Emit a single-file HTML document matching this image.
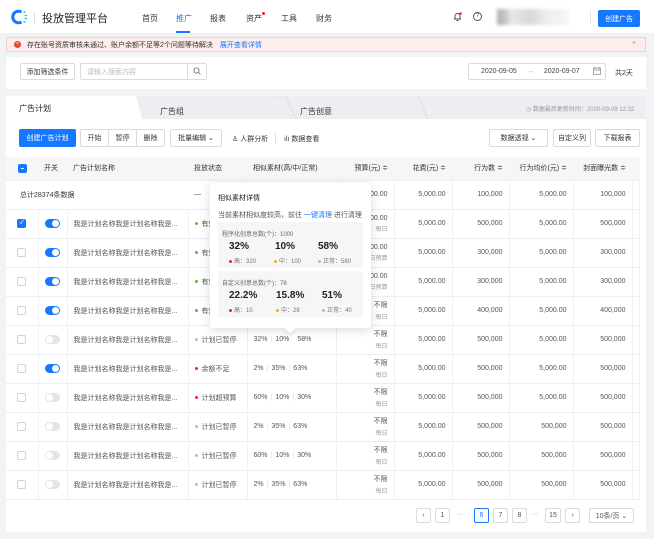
<!DOCTYPE html>
<html><head><meta charset="utf-8"><style>
*{box-sizing:border-box;margin:0;padding:0}
body{width:654px;height:539px;background:#f2f3f5;font-family:"Liberation Sans","Noto Sans CJK SC",sans-serif;color:#333;font-size:7px;position:relative;overflow:hidden}
.a{position:absolute}
.hdr{left:0;top:0;width:654px;height:33px;background:#fff}
.nav{top:13px;font-size:8px;color:#333}
.btn{position:absolute;border:1px solid #d9dbe0;background:#fff;border-radius:2px;font-size:7px;color:#333;display:flex;align-items:center;justify-content:center}
.blue{background:#1677ff;color:#fff;border-color:#1677ff}
table{border-collapse:collapse;table-layout:fixed;position:absolute;left:6px;top:157px;width:634px}
td,th{height:29px;border-bottom:1px solid #eceef1;border-right:1px solid #f0f1f3;font-weight:normal;font-size:7px;color:#555;padding:0 6px;white-space:nowrap;overflow:hidden}
th{height:23px;background:#f5f6f8;color:#333;text-align:left;border-right:none}
.r{text-align:right}
.c{text-align:center;padding:0}
.cb{display:inline-block;width:9px;height:9px;border:1px solid #d0d3d8;border-radius:2px;background:#fff;vertical-align:middle}
.cbk{background:#1677ff;border-color:#1677ff;position:relative}
.tg{display:inline-block;width:15px;height:9px;border-radius:5px;background:#e3e5e8;position:relative;vertical-align:middle}
.tg:after{content:"";position:absolute;left:1px;top:1px;width:7px;height:7px;border-radius:50%;background:#fff}
.on{background:#1677ff}.on:after{left:7px}
.dot{display:inline-block;width:3px;height:3px;border-radius:50%;margin-right:4px;vertical-align:middle}
.sub{display:block;font-size:6px;color:#999;margin-top:2px}
.sep{color:#ddd;margin:0 3px}
.pg{position:absolute;top:508px;height:15px;border:1px solid #d9dbe0;background:#fff;border-radius:2px;font-size:7px;display:flex;align-items:center;justify-content:center;color:#555}
</style></head><body>
<div class="a hdr"></div>
<svg class="a" style="left:9px;top:8px" width="20" height="18" viewBox="0 0 20 18"><path d="M12.5 4A5.8 5.8 0 1 0 12.5 14" fill="none" stroke="#1677ff" stroke-width="3"/><g stroke="#2bc4f0" stroke-width="1.3"><line x1="14.5" y1="4.5" x2="16.5" y2="3.5"/><line x1="15.5" y1="7.5" x2="18" y2="7.5"/><line x1="15.5" y1="10.5" x2="18" y2="10.5"/><line x1="14.5" y1="13.5" x2="16.5" y2="14.5"/></g></svg>
<div class="a" style="left:34px;top:12px;width:1px;height:11px;background:#ddd"></div>
<div class="a" style="left:42px;top:10px;font-size:11px;color:#222">投放管理平台</div>
<div class="a nav" style="left:142px">首页</div>
<div class="a nav" style="left:176px;color:#1677ff">推广</div>
<div class="a" style="left:176px;top:31px;width:14px;height:2px;background:#1677ff"></div>
<div class="a nav" style="left:210px">报表</div>
<div class="a nav" style="left:246px">资产</div>
<div class="a" style="left:262px;top:12px;width:3px;height:3px;border-radius:50%;background:#f5222d"></div>
<div class="a nav" style="left:281px">工具</div>
<div class="a nav" style="left:316px">财务</div>
<svg class="a" style="left:453px;top:12px" width="9" height="10" viewBox="0 0 9 10"><path d="M2 7V4a2.5 2.5 0 0 1 5 0v3h1H1zM3.5 8.5h2" fill="none" stroke="#444" stroke-width="0.9"/><circle cx="7.5" cy="1.5" r="1.3" fill="#f5222d"/></svg>
<div class="a" style="left:473px;top:12px;width:9px;height:9px;border:1px solid #555;border-radius:50%;font-size:6px;text-align:center;line-height:7px">?</div>
<div class="a" style="left:497px;top:9px;width:72px;height:16px;background:linear-gradient(90deg,#b0aeae 0,#c9c7c7 12%,#e8e8e8 20%,#d8d8d8 45%,#eee 70%,#f6f6f6 100%);filter:blur(1.5px)"></div>
<div class="a" style="left:590px;top:11px;width:1px;height:12px;background:#e5e5e5"></div>
<div class="btn blue" style="left:598px;top:10px;width:42px;height:17px">创建广告</div>

<div class="a" style="left:6px;top:37px;width:640px;height:15px;background:#fdeeec;border:1px solid #f8cdc8"></div>
<div class="a" style="left:14px;top:41px;width:7px;height:7px;border-radius:50%;background:#f04134;color:#fff;font-size:5px;text-align:center;line-height:7px">×</div>
<div class="a" style="left:27px;top:40px;font-size:7px;color:#333">存在账号资质审核未通过、账户余额不足等2个问题等待解决<span style="color:#1677ff;margin-left:7px">展开查看详情</span></div>
<div class="a" style="left:632px;top:40px;font-size:7px;color:#999">×</div>

<div class="a" style="left:6px;top:57px;width:640px;height:32px;background:#fff"></div>
<div class="btn" style="left:20px;top:63px;width:55px;height:17px">添加筛选条件</div>
<div class="btn" style="left:80px;top:63px;width:127px;height:17px;justify-content:flex-start;padding-left:6px;color:#bbb">请输入搜索内容</div>
<div class="a" style="left:187px;top:63px;width:1px;height:17px;background:#d9dbe0"></div>
<svg class="a" style="left:193px;top:67px" width="8" height="8" viewBox="0 0 8 8"><circle cx="3.5" cy="3.5" r="2.6" fill="none" stroke="#666" stroke-width="0.8"/><path d="M5.5 5.5L7.5 7.5" stroke="#666" stroke-width="0.8"/></svg>
<div class="btn" style="left:468px;top:63px;width:138px;height:17px;justify-content:flex-start;padding-left:12px;color:#444">2020-09-05<span style="margin:0 10px;color:#999">→</span>2020-09-07</div>
<svg class="a" style="left:593px;top:67px" width="8" height="8" viewBox="0 0 8 8"><rect x="0.5" y="1" width="7" height="6.5" fill="none" stroke="#888" stroke-width="0.7"/><path d="M0.5 3h7M2 0v2M6 0v2" stroke="#888" stroke-width="0.7"/></svg>
<div class="a" style="left:615px;top:68px;color:#333">共2天</div>

<div class="a" style="left:6px;top:96px;width:640px;height:23px;background:#eceef1"></div>
<svg class="a" style="left:6px;top:96px" width="640" height="23"><path d="M268 0H280L290 23" fill="none" stroke="#dde0e4"/><path d="M412 0L422 23" fill="none" stroke="#dde0e4"/></svg>
<div class="a" style="left:6px;top:96px;width:136px;height:23px;background:#fff;clip-path:polygon(0 0,130px 0,136px 23px,0 23px)"></div>
<div class="a" style="left:19px;top:103px;font-size:8px;color:#222">广告计划</div>
<div class="a" style="left:160px;top:106px;font-size:8px;color:#333">广告组</div>
<div class="a" style="left:300px;top:106px;font-size:8px;color:#333">广告创意</div>
<div class="a" style="left:526px;top:104px;font-size:6px;color:#999">◷ 数据最后更新时间：2020-09-08 12:32</div>
<div class="a" style="left:6px;top:119px;width:640px;height:413px;background:#fff"></div>

<div class="btn blue" style="left:19px;top:129px;width:57px;height:18px">创建广告计划</div>
<div class="btn" style="left:80px;top:129px;width:29px;height:18px">开始</div>
<div class="btn" style="left:108px;top:129px;width:29px;height:18px">暂停</div>
<div class="btn" style="left:136px;top:129px;width:29px;height:18px">删除</div>
<div class="btn" style="left:170px;top:129px;width:52px;height:18px">批量编辑 ⌄</div>
<div class="a" style="left:232px;top:134px;color:#333">♙ 人群分析</div>
<div class="a" style="left:275px;top:133px;width:1px;height:10px;background:#ddd"></div>
<div class="a" style="left:284px;top:134px;color:#333">ılı 数据查看</div>
<div class="btn" style="left:489px;top:129px;width:59px;height:18px">数据透视 ⌄</div>
<div class="btn" style="left:553px;top:129px;width:38px;height:18px">自定义列</div>
<div class="btn" style="left:595px;top:129px;width:45px;height:18px">下载报表</div>

<table>
<colgroup><col style="width:32px"><col style="width:29px"><col style="width:121px"><col style="width:59px"><col style="width:89px"><col style="width:58px"><col style="width:58px"><col style="width:57px"><col style="width:64px"><col style="width:59px"><col></colgroup>
<tr><th class="c"><span class="cb cbk"><span style="position:absolute;left:2px;top:3px;width:3px;height:1px;background:#fff"></span></span></th><th>开关</th><th>广告计划名称</th><th>投放状态</th><th>相似素材(高/中/正常)</th><th class="r">预算(元) ≑</th><th class="r">花费(元) ≑</th><th class="r">行为数 ≑</th><th class="r">行为均价(元) ≑</th><th class="r">封面曝光数 ≑</th><th></th></tr>
<tr><td colspan="3" style="border-right:none;padding-left:14px;color:#333">总计28374条数据</td><td>—</td><td></td><td class="r">5,000.00</td><td class="r">5,000.00</td><td class="r">100,000</td><td class="r">5,000.00</td><td class="r">100,000</td><td></td></tr>
<tr><td class="c"><span class="cb cbk" style="color:#fff;font-size:6px;line-height:7px;text-align:center">✓</span></td><td class="c"><span class="tg on"></span></td><td>我是计划名称我是计划名称我是...</td><td><span class="dot" style="background:#52c41a"></span>有效</td><td></td><td class="r">5,000.00<span class="sub">每日</span></td><td class="r">5,000.00</td><td class="r">500,000</td><td class="r">5,000.00</td><td class="r">500,000</td><td></td></tr>
<tr><td class="c"><span class="cb"></span></td><td class="c"><span class="tg on"></span></td><td>我是计划名称我是计划名称我是...</td><td><span class="dot" style="background:#52c41a"></span>有效</td><td></td><td class="r">5,000.00<span class="sub">日预算</span></td><td class="r">5,000.00</td><td class="r">300,000</td><td class="r">5,000.00</td><td class="r">300,000</td><td></td></tr>
<tr><td class="c"><span class="cb"></span></td><td class="c"><span class="tg on"></span></td><td>我是计划名称我是计划名称我是...</td><td><span class="dot" style="background:#52c41a"></span>有效</td><td></td><td class="r">5,000.00<span class="sub">日预算</span></td><td class="r">5,000.00</td><td class="r">300,000</td><td class="r">5,000.00</td><td class="r">300,000</td><td></td></tr>
<tr><td class="c"><span class="cb"></span></td><td class="c"><span class="tg on"></span></td><td>我是计划名称我是计划名称我是...</td><td><span class="dot" style="background:#52c41a"></span>有效</td><td></td><td class="r">不限<span class="sub">每日</span></td><td class="r">5,000.00</td><td class="r">400,000</td><td class="r">5,000.00</td><td class="r">400,000</td><td></td></tr>
<tr><td class="c"><span class="cb"></span></td><td class="c"><span class="tg"></span></td><td>我是计划名称我是计划名称我是...</td><td><span class="dot" style="background:#bbb"></span>计划已暂停</td><td>32%<span class="sep">|</span>10%<span class="sep"> </span>58%</td><td class="r">不限<span class="sub">每日</span></td><td class="r">5,000.00</td><td class="r">500,000</td><td class="r">5,000.00</td><td class="r">500,000</td><td></td></tr>
<tr><td class="c"><span class="cb"></span></td><td class="c"><span class="tg on"></span></td><td>我是计划名称我是计划名称我是...</td><td><span class="dot" style="background:#f5222d"></span>余额不足</td><td>2%<span class="sep">|</span>35%<span class="sep">|</span>63%</td><td class="r">不限<span class="sub">每日</span></td><td class="r">5,000.00</td><td class="r">500,000</td><td class="r">5,000.00</td><td class="r">500,000</td><td></td></tr>
<tr><td class="c"><span class="cb"></span></td><td class="c"><span class="tg"></span></td><td>我是计划名称我是计划名称我是...</td><td><span class="dot" style="background:#f5222d"></span>计划超预算</td><td>60%<span class="sep">|</span>10%<span class="sep">|</span>30%</td><td class="r">不限<span class="sub">每日</span></td><td class="r">5,000.00</td><td class="r">500,000</td><td class="r">5,000.00</td><td class="r">500,000</td><td></td></tr>
<tr><td class="c"><span class="cb"></span></td><td class="c"><span class="tg"></span></td><td>我是计划名称我是计划名称我是...</td><td><span class="dot" style="background:#bbb"></span>计划已暂停</td><td>2%<span class="sep">|</span>35%<span class="sep">|</span>63%</td><td class="r">不限<span class="sub">每日</span></td><td class="r">5,000.00</td><td class="r">500,000</td><td class="r">500,000</td><td class="r">500,000</td><td></td></tr>
<tr><td class="c"><span class="cb"></span></td><td class="c"><span class="tg"></span></td><td>我是计划名称我是计划名称我是...</td><td><span class="dot" style="background:#bbb"></span>计划已暂停</td><td>60%<span class="sep">|</span>10%<span class="sep">|</span>30%</td><td class="r">不限<span class="sub">每日</span></td><td class="r">5,000.00</td><td class="r">500,000</td><td class="r">500,000</td><td class="r">500,000</td><td></td></tr>
<tr><td class="c"><span class="cb"></span></td><td class="c"><span class="tg"></span></td><td>我是计划名称我是计划名称我是...</td><td><span class="dot" style="background:#bbb"></span>计划已暂停</td><td>2%<span class="sep">|</span>35%<span class="sep">|</span>63%</td><td class="r">不限<span class="sub">每日</span></td><td class="r">5,000.00</td><td class="r">500,000</td><td class="r">500,000</td><td class="r">500,000</td><td></td></tr>
</table>

<div class="pg" style="left:416px;width:15px">‹</div>
<div class="pg" style="left:435px;width:15px">1</div>
<div class="a" style="left:456px;top:511px;color:#999">···</div>
<div class="pg" style="left:474px;width:15px;border-color:#1677ff;color:#1677ff">6</div>
<div class="pg" style="left:493px;width:15px">7</div>
<div class="pg" style="left:512px;width:15px">8</div>
<div class="a" style="left:531px;top:511px;color:#999">···</div>
<div class="pg" style="left:545px;width:16px">15</div>
<div class="pg" style="left:565px;width:15px">›</div>
<div class="pg" style="left:589px;width:45px">10条/页 ⌄</div>

<div class="a" style="left:210px;top:183px;width:161px;height:145px;background:#fff;border-radius:3px;box-shadow:0 2px 10px rgba(0,0,0,.15)"></div>
<div class="a" style="left:286px;top:324px;width:8px;height:8px;background:#fff;transform:rotate(45deg);box-shadow:2px 2px 3px rgba(0,0,0,.08)"></div>
<div class="a" style="left:218px;top:193px;font-size:7px;color:#222">相似素材详情</div>
<div class="a" style="left:218px;top:210px;font-size:7px;color:#555">当前素材相似度较高，前往 <span style="color:#1677ff">一键清理</span> 进行清理</div>
<div class="a" style="left:218px;top:222px;width:145px;height:46px;background:#f5f6f8;border-radius:2px"></div>
<div class="a" style="left:222px;top:229px;font-size:6px;color:#666">程序化创意总数(个)：1000</div>
<div class="a" style="left:229px;top:241px;font-size:10px;font-weight:bold;color:#222">32%</div>
<div class="a" style="left:275px;top:241px;font-size:10px;font-weight:bold;color:#222">10%</div>
<div class="a" style="left:318px;top:241px;font-size:10px;font-weight:bold;color:#222">58%</div>
<div class="a" style="left:229px;top:256px;font-size:6px;color:#777"><span class="dot" style="background:#f5222d;margin-right:2px"></span>高：320</div>
<div class="a" style="left:274px;top:256px;font-size:6px;color:#777"><span class="dot" style="background:#faad14;margin-right:2px"></span>中：100</div>
<div class="a" style="left:318px;top:256px;font-size:6px;color:#777"><span class="dot" style="background:#bbb;margin-right:2px"></span>正常：580</div>
<div class="a" style="left:218px;top:271px;width:145px;height:46px;background:#f5f6f8;border-radius:2px"></div>
<div class="a" style="left:222px;top:278px;font-size:6px;color:#666">自定义创意总数(个)：78</div>
<div class="a" style="left:229px;top:290px;font-size:10px;font-weight:bold;color:#222">22.2%</div>
<div class="a" style="left:276px;top:290px;font-size:10px;font-weight:bold;color:#222">15.8%</div>
<div class="a" style="left:322px;top:290px;font-size:10px;font-weight:bold;color:#222">51%</div>
<div class="a" style="left:229px;top:305px;font-size:6px;color:#777"><span class="dot" style="background:#f5222d;margin-right:2px"></span>高：10</div>
<div class="a" style="left:276px;top:305px;font-size:6px;color:#777"><span class="dot" style="background:#faad14;margin-right:2px"></span>中：28</div>
<div class="a" style="left:322px;top:305px;font-size:6px;color:#777"><span class="dot" style="background:#bbb;margin-right:2px"></span>正常：40</div>
</body></html>
